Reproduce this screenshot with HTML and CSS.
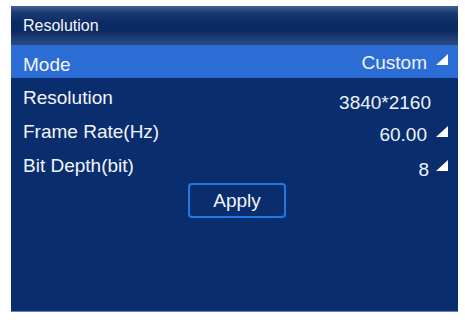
FILE: index.html
```html
<!DOCTYPE html>
<html>
<head>
<meta charset="utf-8">
<link rel="stylesheet" href="styles.css">
</head>
<body>
<div class="panel">
  <div class="header">Resolution</div>
  <div class="row row-mode selected">
    <span class="label">Mode</span>
    <span class="value v-mode">Custom<svg class="tri" width="12" height="11" viewBox="0 0 12 11"><polygon points="0,11 12,11 12,0" fill="#ffffff"/></svg></span>
  </div>
  <div class="row">
    <span class="label">Resolution</span>
    <span class="value v-res plain">3840*2160</span>
  </div>
  <div class="row">
    <span class="label">Frame Rate(Hz)</span>
    <span class="value v-fr">60.00<svg class="tri" width="12" height="11" viewBox="0 0 12 11"><polygon points="0,11 12,11 12,0" fill="#ffffff"/></svg></span>
  </div>
  <div class="row">
    <span class="label">Bit Depth(bit)</span>
    <span class="value v-bd">8<svg class="tri" width="12" height="11" viewBox="0 0 12 11"><polygon points="0,11 12,11 12,0" fill="#ffffff"/></svg></span>
  </div>
  <div class="actions">
    <button class="apply">Apply</button>
  </div>
</div>
</body>
</html>
```
FILE: styles.css
```css
html, body {
  margin: 0;
  padding: 0;
  background: #ffffff;
}
body {
  font-family: "Liberation Sans", Arial, sans-serif;
  padding: 6px 0 0 11px;
}
.panel {
  width: 447px;
  height: 306px;
  box-sizing: border-box;
  background: #0a2e6d;
  border-bottom: 1px solid #6283bb;
  color: #f2f5fb;
}
.header {
  height: 39px;
  line-height: 39px;
  padding-left: 12px;
  font-size: 16px;
  color: #f4f6fa;
  background: linear-gradient(to bottom, #3f5f98 0%, #1a3a74 18%, #0c2a62 45%, #0d2b63 65%, #1f3f7b 85%, #2b4a85 100%);
}
.row {
  height: 34px;
  display: flex;
  justify-content: space-between;
  align-items: flex-start;
  padding-left: 12px;
  padding-right: 10px;
  font-size: 19px;
}
.row-mode {
  height: 33px;
}
.selected {
  background: #2c6cd5;
}
.label {
  line-height: 21px;
  padding-top: 9px;
}
.value {
  line-height: 21px;
  color: #eef2f9;
}
.tri {
  margin-left: 9px;
  vertical-align: 4px;
}
.v-mode { padding-top: 7px; }
.v-res { padding-top: 14px; padding-right: 17px; }
.v-fr { padding-top: 12px; }
.v-bd { padding-top: 13px; }
.v-bd .tri { margin-left: 7px; vertical-align: 5px; }
.actions {
  display: flex;
  justify-content: center;
  padding-top: 3px;
  padding-left: 5px;
}
.apply {
  width: 98px;
  height: 35px;
  box-sizing: border-box;
  border: 2px solid #1f7ae6;
  border-radius: 4px;
  background: transparent;
  color: #f2f5fb;
  font-family: "Liberation Sans", Arial, sans-serif;
  font-size: 19px;
  line-height: 31px;
  padding: 0;
}
```
